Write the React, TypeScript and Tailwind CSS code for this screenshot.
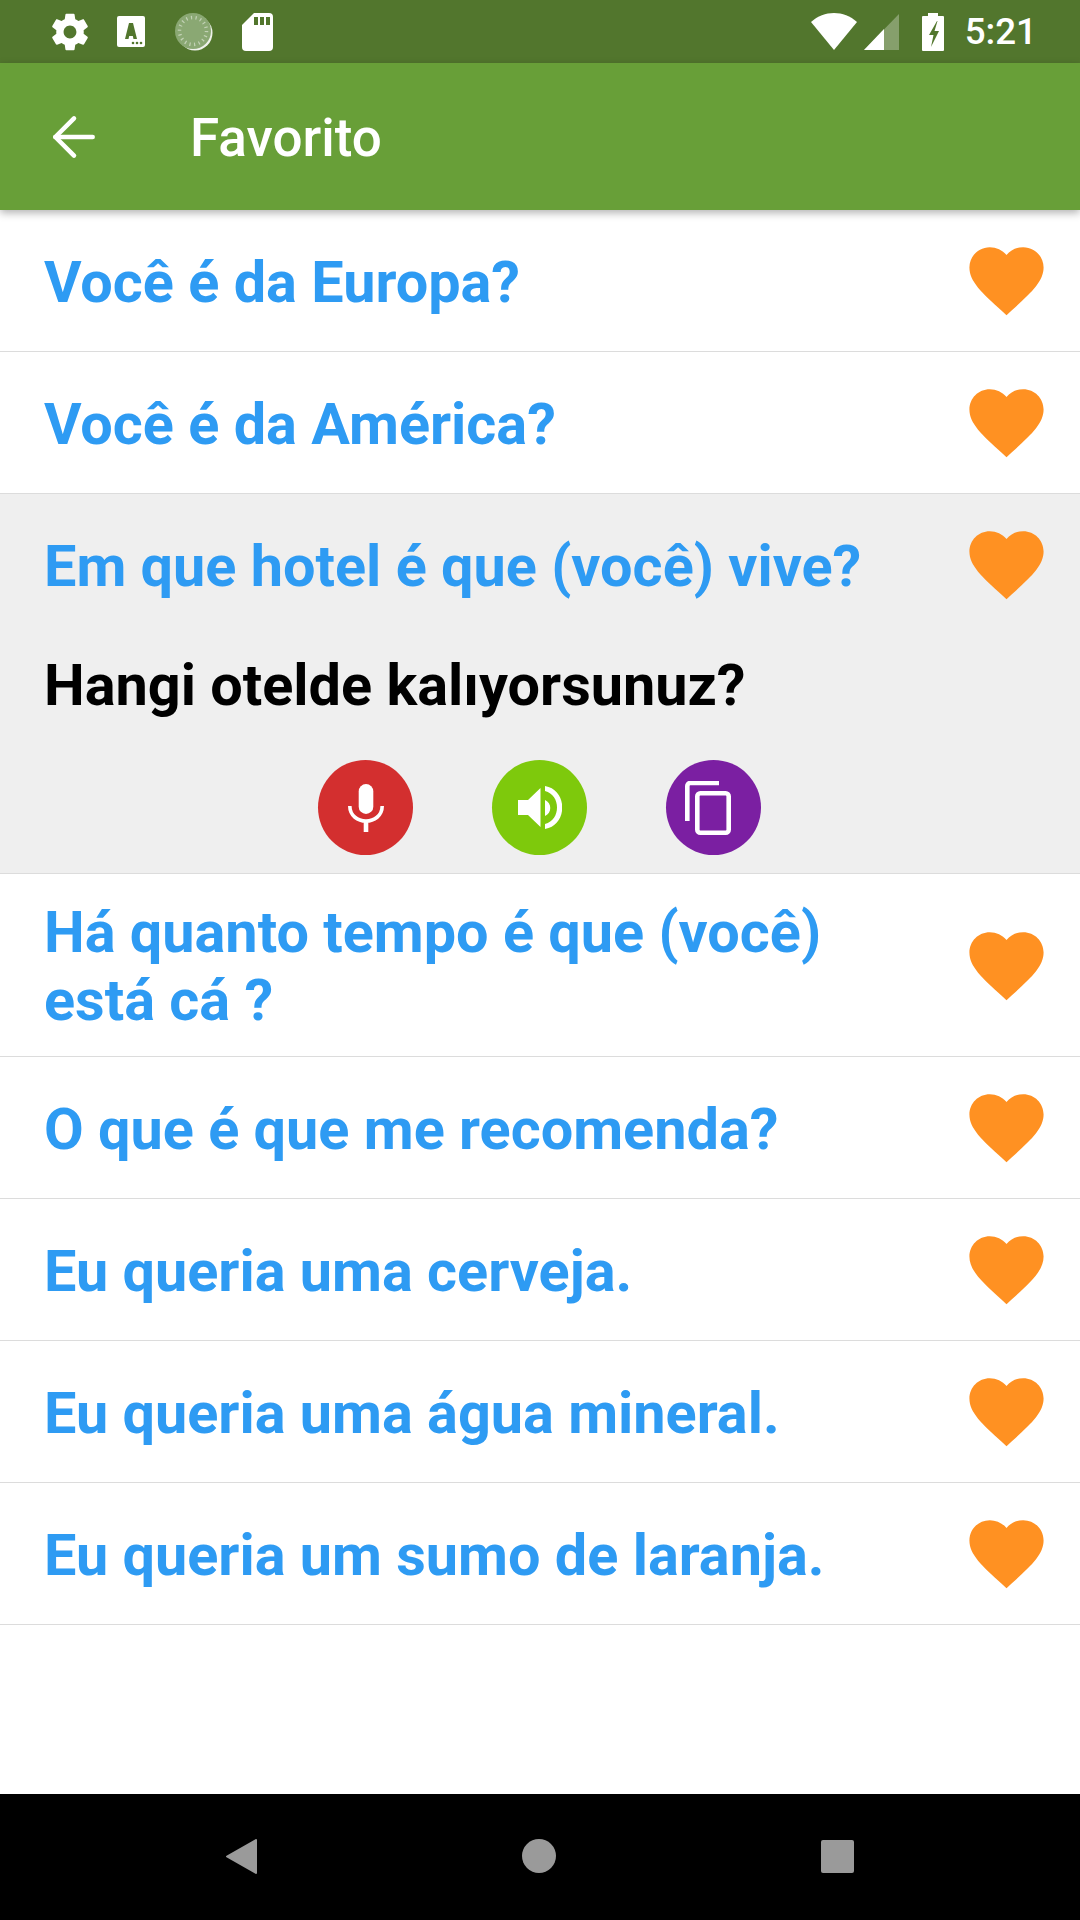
import { ArrowLeft } from "lucide-react";

const phrasesTop = ["Você é da Europa?", "Você é da América?"];
const phrasesBottom = ["O que é que me recomenda?", "Eu queria uma cerveja.", "Eu queria uma água mineral.", "Eu queria um sumo de laranja."];

function Heart() {
  return (
    <svg viewBox="0 0 24 24" className="w-[89px] h-[89px] shrink-0 -mr-[1px]" fill="#ff9122">
      <path d="M12 21.35l-1.45-1.32C5.4 15.36 2 12.28 2 8.5 2 5.42 4.42 3 7.5 3c1.74 0 3.41.81 4.5 2.09C13.09 3.81 14.76 3 16.5 3 19.58 3 22 5.42 22 8.5c0 3.78-3.4 6.86-8.55 11.54L12 21.35z" />
    </svg>
  );
}

function StatusBar() {
  return (
    <div className="h-[63px] bg-[#52762d] flex items-center justify-between pl-[48px] pr-[43px] text-white">
      <div className="flex items-center">
        <svg viewBox="0 0 24 24" className="w-[44px] h-[44px]" fill="white">
          <path d="M19.43 12.98c.04-.32.07-.64.07-.98s-.03-.66-.07-.98l2.11-1.65c.19-.15.24-.42.12-.64l-2-3.46c-.12-.22-.39-.3-.61-.22l-2.49 1c-.52-.4-1.08-.73-1.69-.98l-.38-2.65C14.46 2.18 14.25 2 14 2h-4c-.25 0-.46.18-.49.42l-.38 2.65c-.61.25-1.17.59-1.69.98l-2.49-1c-.23-.09-.49 0-.61.22l-2 3.46c-.13.22-.07.49.12.64l2.11 1.65c-.04.32-.07.65-.07.98s.03.66.07.98l-2.11 1.65c-.19.15-.24.42-.12.64l2 3.46c.12.22.39.3.61.22l2.49-1c.52.4 1.08.73 1.69.98l.38 2.65c.03.24.24.42.49.42h4c.25 0 .46-.18.49-.42l.38-2.65c.61-.25 1.17-.59 1.69-.98l2.49 1c.23.09.49 0 .61-.22l2-3.46c.12-.22.07-.49-.12-.64l-2.11-1.65zM12 15.5c-1.93 0-3.5-1.57-3.5-3.5s1.57-3.5 3.5-3.5 3.5 1.57 3.5 3.5-1.57 3.5-3.5 3.5z" />
        </svg>
        <svg viewBox="0 0 28 31" className="w-[28px] h-[31px] ml-[25px]">
          <rect width="28" height="31" rx="2" fill="white" />
          <path d="M8 23 L12 7 H16 L20 23 H16.5 L15.8 20 H12.2 L11.5 23 Z" fill="#52762d" />
          <circle cx="16" cy="27" r="1.3" fill="#52762d" />
          <circle cx="20" cy="27" r="1.3" fill="#52762d" />
          <circle cx="24" cy="27" r="1.3" fill="#52762d" />
        </svg>
        <svg viewBox="0 0 38 38" className="w-[38px] h-[38px] ml-[30px]">
          <circle cx="20" cy="20" r="17.5" fill="white" opacity="0.9" />
          <circle cx="18" cy="18" r="18" fill="#8aa873" />
          <circle cx="18" cy="18" r="13.5" fill="none" stroke="#c3d2b6" strokeWidth="3.5" strokeDasharray="1.2 3.5" />
        </svg>
        <svg viewBox="0 0 31 38" className="w-[31px] h-[38px] ml-[29px]">
          <path d="M12 0 H27 a4 4 0 0 1 4 4 V34 a4 4 0 0 1 -4 4 H4 a4 4 0 0 1 -4 -4 V12 Z" fill="white" />
          <rect x="12" y="4" width="4" height="8" fill="#52762d" />
          <rect x="18" y="4" width="4" height="8" fill="#52762d" />
          <rect x="24" y="4" width="4" height="8" fill="#52762d" />
        </svg>
      </div>
      <div className="flex items-center">
        <svg viewBox="0 0 46 37" className="w-[46px] h-[37px]">
          <path d="M0 9 C13 -3 33 -3 46 9 L23 37 Z" fill="white" />
        </svg>
        <svg viewBox="0 0 35 36" className="w-[35px] h-[36px] ml-[7px]">
          <path d="M35 0 V36 H0 Z" fill="white" opacity="0.3" />
          <path d="M20 15 V36 H0 Z" fill="white" />
        </svg>
        <svg viewBox="0 0 22 38" className="w-[22px] h-[38px] ml-[23px]">
          <path d="M6 0 H16 V3 H21 a1 1 0 0 1 1 1 V37 a1 1 0 0 1 -1 1 H1 a1 1 0 0 1 -1 -1 V4 a1 1 0 0 1 1 -1 H6 Z" fill="white" />
          <path d="M15 8 L7 22 H11.5 L9 34 L17 18 H12.5 L15.5 8 Z" fill="#52762d" />
        </svg>
        <span className="ml-[21px] pt-[2px] text-[36.75px] leading-none font-medium">5:21</span>
      </div>
    </div>
  );
}

function PhraseRow({ text }: { text: string }) {
  return (
    <div className="flex items-center justify-between h-[142px] border-b border-[#dcdcdc] pl-[44px] pr-[30px]">
      <span className="pt-[4px] text-[57.6px] leading-[68px] font-bold text-[#2e9bf3]">{text}</span>
      <Heart />
    </div>
  );
}

export default function App() {
  return (
    <div className="w-[1080px] h-[1920px] bg-white flex flex-col [font-family:Roboto,sans-serif] overflow-hidden">
      <StatusBar />
      <div className="h-[147px] bg-[#689f38] flex items-center pl-[42px] text-white shadow-[0_3px_8px_rgba(0,0,0,0.3)] relative">
        <ArrowLeft size={64} strokeWidth={1.7} />
        <span className="ml-[84px] pt-[4px] text-[53px] font-medium leading-none">Favorito</span>
      </div>

      <div className="flex-1">
        {phrasesTop.map((p) => (
          <PhraseRow key={p} text={p} />
        ))}

        {/* expanded phrase with translation and actions */}
        <div className="h-[380px] bg-[#efefef] border-b border-[#dcdcdc] pl-[44px] pr-[30px]">
          <div className="flex items-center justify-between h-[141px]">
            <span className="pt-[4px] text-[57.6px] leading-[68px] font-bold text-[#2e9bf3]">Em que hotel é que (você) vive?</span>
            <Heart />
          </div>
          <div className="text-[57.6px] leading-[68px] font-bold text-black mt-[17px]">Hangi otelde kalıyorsunuz?</div>
          <div className="flex justify-center gap-[79px] mt-[40px] -ml-[15px]">
            <div className="w-[95px] h-[95px] rounded-full bg-[#d32f2f] flex items-center justify-center">
              <svg viewBox="0 0 36 48" className="w-[36px] h-[48px]" fill="none">
                <rect x="10.7" y="0" width="14.6" height="30" rx="7.3" fill="white" />
                <path d="M1.8 22 C2 42 34 42 34.2 22" stroke="white" strokeWidth="3.6" />
                <rect x="15.7" y="36" width="4.6" height="12" fill="white" />
              </svg>
            </div>
            <div className="w-[95px] h-[95px] rounded-full bg-[#7ec90c] flex items-center justify-center">
              <svg viewBox="0 0 44 43" className="w-[44px] h-[43px]" fill="white">
                <path d="M0 14 H10 L22.5 2 V41 L10 29 H0 Z" />
                <path d="M27 14 C34 17 34 27 27 30 Z" />
                <path d="M27 0 C50 4 50 39 27 43 V38 C43 34 43 9 27 5 Z" />
              </svg>
            </div>
            <div className="w-[95px] h-[95px] rounded-full bg-[#7b1fa2] flex items-center justify-center">
              <svg viewBox="0 0 46 54" className="w-[46px] h-[54px] mr-[12px]" fill="none" stroke="white" strokeWidth="4.6">
                <path d="M2.3 40 V5 a3 3 0 0 1 3 -3 H34" />
                <rect x="12.3" y="12.3" width="31.4" height="39.4" rx="3" />
              </svg>
            </div>
          </div>
        </div>

        <div className="flex items-center justify-between h-[183px] border-b border-[#dcdcdc] pl-[44px] pr-[30px]">
          <span className="pt-[4px] text-[57.6px] leading-[68px] font-bold text-[#2e9bf3] w-[840px]">Há quanto tempo é que (você) está cá ?</span>
          <Heart />
        </div>

        {phrasesBottom.map((p) => (
          <PhraseRow key={p} text={p} />
        ))}
      </div>

      {/* system navigation */}
      <div className="h-[126px] bg-black flex items-center justify-between pl-[226px] pr-[226px] pb-[2px]">
        <svg viewBox="0 0 31 35" className="w-[31px] h-[35px]" fill="#9a9a9a">
          <path d="M30 1 V34 L1 17.5 Z" stroke="#9a9a9a" strokeLinejoin="round" strokeWidth="2" />
        </svg>
        <div className="w-[34px] h-[34px] rounded-full bg-[#9a9a9a]" />
        <div className="w-[33px] h-[33px] rounded-[2px] bg-[#9a9a9a]" />
      </div>
    </div>
  );
}
